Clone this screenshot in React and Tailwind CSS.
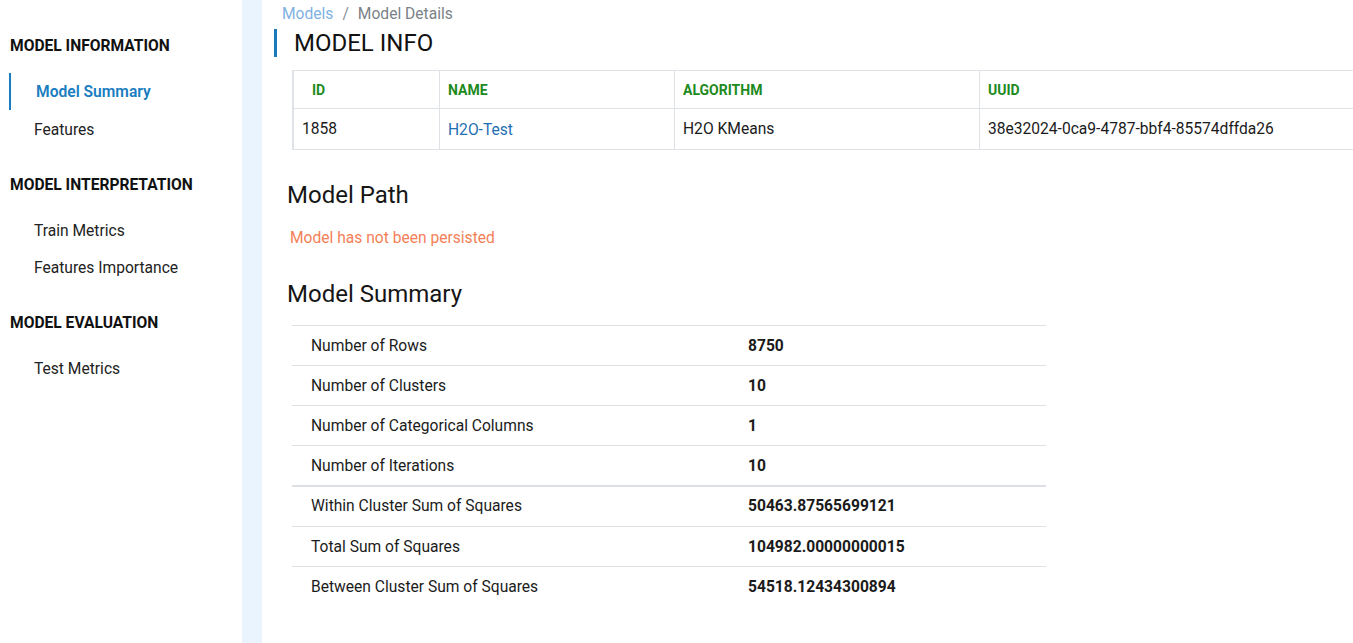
import React from "react";

const font = { fontFamily: "Roboto, 'Noto Sans', Arial, sans-serif" };

function SideHeader({ children, className = "" }) {
  return (
    <div className={"pl-[10px] text-[15.6px] leading-[24px] font-bold text-[#111] " + className}>
      {children}
    </div>
  );
}

function SideItem({ children, active, className = "" }) {
  if (active) {
    return (
      <div className={"ml-[9px] h-[37px] border-l-2 border-[#1a7dc1] pl-[25px] pt-[2px] flex items-center text-[15.6px] font-semibold text-[#1a7dc1] " + className}>
        {children}
      </div>
    );
  }
  return (
    <div className={"h-[37px] pl-[34px] pt-[2px] flex items-center text-[15.6px] text-[#222] " + className}>{children}</div>
  );
}

const summary = [
  ["Number of Rows", "8750"],
  ["Number of Clusters", "10"],
  ["Number of Categorical Columns", "1"],
  ["Number of Iterations", "10"],
  ["Within Cluster Sum of Squares", "50463.87565699121"],
  ["Total Sum of Squares", "104982.00000000015"],
  ["Between Cluster Sum of Squares", "54518.12434300894"],
];

export default function App() {
  return (
    <div className="flex min-h-screen h-[643px] overflow-hidden bg-white" style={font}>
      <aside className="w-[242px] shrink-0 pt-[34px]">
        <SideHeader>MODEL INFORMATION</SideHeader>
        <div className="mt-[15px]">
          <SideItem active>Model Summary</SideItem>
          <SideItem className="h-[38px] pt-[4px]">Features</SideItem>
        </div>
        <SideHeader className="mt-[25px]">MODEL INTERPRETATION</SideHeader>
        <div className="mt-[15px]">
          <SideItem>Train Metrics</SideItem>
          <SideItem>Features Importance</SideItem>
        </div>
        <SideHeader className="mt-[25px]">MODEL EVALUATION</SideHeader>
        <div className="mt-[15px]">
          <SideItem>Test Metrics</SideItem>
        </div>
      </aside>
      <div className="w-[20px] shrink-0 bg-[#eaf4fe]" />
      <main className="flex-1 min-w-0 pl-[12px] pt-[4px]">
        <nav className="ml-[8px] flex items-center text-[15.6px] leading-[20px]">
          <span className="text-[#7fb2e3]">Models</span>
          <span className="px-[9px] text-[#8a9096]">/</span>
          <span className="text-[#7b8288]">Model Details</span>
        </nav>
        <div className="mt-[5px] h-[28px] border-l-[3px] border-[#1a78bd] pl-[17px] flex items-center text-[24px] leading-[28px] text-[#111]">
          MODEL INFO
        </div>
        <div className="mt-[13px] ml-[18px] border-l-2 border-t border-[#dfe2e6]">
          <div className="grid grid-cols-[145px_235px_305px_1fr] h-[38px] border-b border-[#dfe2e6] text-[14px] font-bold text-[#1d8a1d]">
            <div className="pl-[18px] pt-[2px] flex items-center">ID</div>
            <div className="pl-[8px] pt-[2px] flex items-center border-l border-[#dfe2e6]">NAME</div>
            <div className="pl-[8px] pt-[2px] flex items-center border-l border-[#dfe2e6]">ALGORITHM</div>
            <div className="pl-[8px] pt-[2px] flex items-center border-l border-[#dfe2e6]">UUID</div>
          </div>
          <div className="grid grid-cols-[145px_235px_305px_1fr] h-[41px] border-b border-[#dfe2e6] text-[15.6px] text-[#1b1b1b]">
            <div className="pl-[8px] pt-[2px] flex items-center">1858</div>
            <div className="pl-[8px] flex items-center border-l border-[#dfe2e6] text-[#1f6fb3] pt-[4px]">H2O-Test</div>
            <div className="pl-[8px] pt-[2px] flex items-center border-l border-[#dfe2e6]">H2O KMeans</div>
            <div className="pl-[8px] pt-[2px] flex items-center border-l border-[#dfe2e6]">38e32024-0ca9-4787-bbf4-85574dffda26</div>
          </div>
        </div>
        <h2 className="mt-[31px] ml-[13px] text-[24px] leading-[28px] text-[#161616]">Model Path</h2>
        <p className="mt-[17px] ml-[16px] text-[15.6px] leading-[24px] text-[#f47f57]">Model has not been persisted</p>
        <h2 className="mt-[30px] ml-[13px] text-[24px] leading-[28px] text-[#161616]">Model Summary</h2>
        <div className="mt-[17px] ml-[18px] w-[754px]">
          {summary.map(([k, v], i) => (
            <div
              key={k}
              className={
                "grid grid-cols-[456px_1fr] items-center text-[15.6px] text-[#1b1b1b] " +
                (i === 4 ? "h-[41px] pt-[1px] border-t-2 border-[#dcdfe3]" : "h-[40px] pt-[2px] border-t border-[#e0e0e0]")
              }
            >
              <div className="pl-[19px]">{k}</div>
              <div className="font-bold">{v}</div>
            </div>
          ))}
        </div>
      </main>
    </div>
  );
}
